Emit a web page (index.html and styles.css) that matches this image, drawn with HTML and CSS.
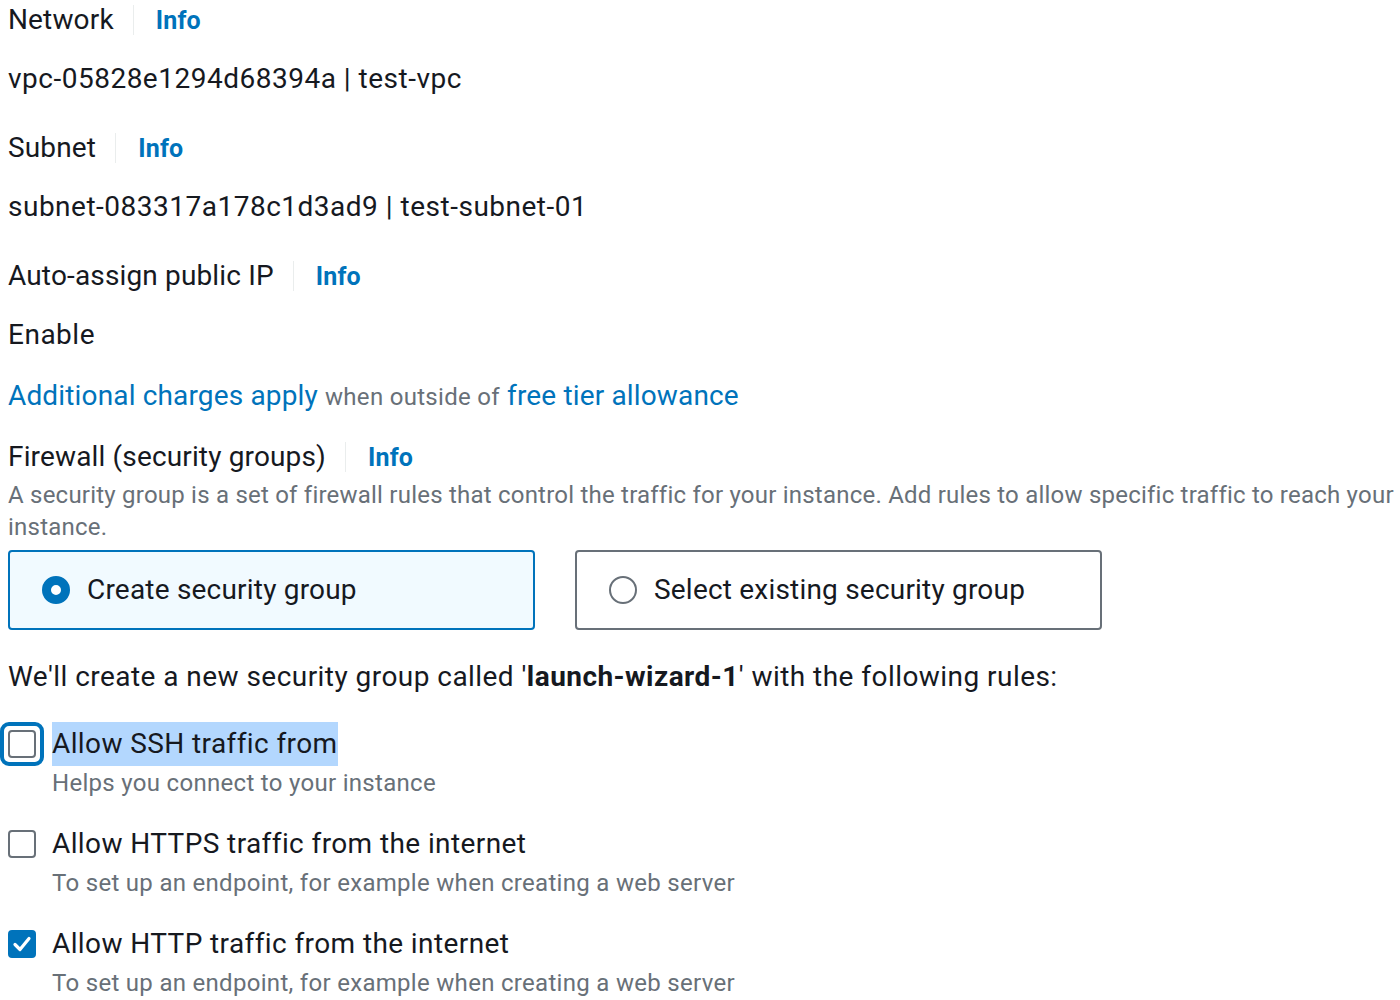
FILE: index.html
```html
<!DOCTYPE html>
<html lang="en">
<head>
<meta charset="utf-8">
<title>Network settings</title>
<link rel="stylesheet" href="styles.css">
</head>
<body>
<main class="form">
  <div class="field">
    <div class="label-row"><span class="label">Network</span><span class="divider"></span><a class="info">Info</a></div>
    <div class="value">vpc-05828e1294d68394a | test-vpc</div>
  </div>
  <div class="field">
    <div class="label-row"><span class="label">Subnet</span><span class="divider"></span><a class="info">Info</a></div>
    <div class="value">subnet-083317a178c1d3ad9 | test-subnet-01</div>
  </div>
  <div class="field">
    <div class="label-row"><span class="label">Auto-assign public IP</span><span class="divider"></span><a class="info">Info</a></div>
    <div class="value">Enable</div>
  </div>
  <p class="charges"><a class="link">Additional charges apply</a> <span class="muted">when outside of</span> <a class="link">free tier allowance</a></p>

  <div class="field firewall">
    <div class="label-row"><span class="label">Firewall (security groups)</span><span class="divider"></span><a class="info">Info</a></div>
    <p class="desc">A security group is a set of firewall rules that control the traffic for your instance. Add rules to allow specific traffic to reach your instance.</p>
    <div class="tiles">
      <label class="tile selected"><span class="radio on"></span>Create security group</label>
      <label class="tile"><span class="radio"></span>Select existing security group</label>
    </div>
  </div>

  <p class="intro">We'll create a new security group called '<b>launch-wizard-1</b>' with the following rules:</p>

  <div class="rules">
    <div class="rule first">
      <span class="box focus"><span class="check"></span></span>
      <div class="rule-text">
        <div class="rule-title"><span class="hl">Allow SSH traffic from</span></div>
        <div class="rule-desc">Helps you connect to your instance</div>
      </div>
    </div>
    <div class="rule">
      <span class="box"><span class="check"></span></span>
      <div class="rule-text">
        <div class="rule-title">Allow HTTPS traffic from the internet</div>
        <div class="rule-desc">To set up an endpoint, for example when creating a web server</div>
      </div>
    </div>
    <div class="rule">
      <span class="box"><span class="check checked"><svg viewBox="0 0 28 28" width="28" height="28"><path d="M7 14.5 L12 19.5 L21 8.5" fill="none" stroke="#fff" stroke-width="3.2" stroke-linecap="round" stroke-linejoin="round"/></svg></span></span>
      <div class="rule-text">
        <div class="rule-title">Allow HTTP traffic from the internet</div>
        <div class="rule-desc">To set up an endpoint, for example when creating a web server</div>
      </div>
    </div>
  </div>
</main>
</body>
</html>
```

FILE: styles.css
```css
* { box-sizing: border-box; }
html, body { margin: 0; padding: 0; background: #fff; }
body {
  font-family: Roboto, "Liberation Sans", Arial, sans-serif;
  color: #16191f;
  font-size: 28px;
  line-height: 40px;
  letter-spacing: 0.5px;
  width: 1400px;
  overflow: hidden;
}
.form { padding: 0 0 0 8px; width: 1430px; }
p { margin: 0; }
a { text-decoration: none; cursor: pointer; }

.field { margin-bottom: 29px; }
.label-row { display: flex; align-items: center; height: 40px; }
.label { color: #16191f; letter-spacing: 0.15px; }
.divider { width: 1px; height: 30px; background: #eaeded; margin: 0 22px 0 19px; }
.info { color: #0073bb; font-weight: 700; font-size: 25px; letter-spacing: 0.2px; padding-top: 2px; }
.value { margin-top: 19px; }

.charges { margin-top: -8px; line-height: 40px; letter-spacing: 0.15px; }
.link { color: #0073bb; }
.muted { color: #687078; font-size: 24px; letter-spacing: 0.3px; }

.firewall { margin-top: 20px; margin-bottom: 27px; }
.desc { color: #687078; font-size: 24px; line-height: 32px; margin-top: 2px; letter-spacing: 0.22px; }
.tiles { display: flex; gap: 40px; margin-top: 7px; }
.tile {
  width: 527px; height: 80px;
  display: flex; align-items: center; gap: 17px;
  padding-left: 32px;
  border: 2px solid #687078; border-radius: 4px;
  background: #fff;
  letter-spacing: 0.2px;
}
.tile.selected { border-color: #0073bb; background: #f1faff; }
.radio {
  width: 28px; height: 28px; border-radius: 50%;
  border: 2px solid #687078; background: #fff; flex: none;
}
.radio.on { border: 9px solid #0073bb; }

.intro { line-height: 40px; letter-spacing: 0.45px; }

.rules { margin-top: 27px; }
.rule { display: flex; gap: 16px; margin-bottom: 25px; }
.rule-title { line-height: 40px; letter-spacing: 0.4px; }
.rule-desc { color: #687078; font-size: 24px; line-height: 32px; margin-top: 3px; letter-spacing: 0.3px; }
.box { width: 28px; height: 28px; margin-top: 6px; position: relative; flex: none; }
.check {
  display: block; width: 28px; height: 28px;
  border: 2px solid #687078; border-radius: 4px; background: #fff;
}
.check.checked { border-color: #0073bb; background: #0073bb; position: relative; }
.check.checked svg { position: absolute; left: -2px; top: -2px; }
.box.focus::before {
  content: ""; position: absolute; left: -8px; top: -8px; right: -8px; bottom: -8px;
  border: 4px solid #0073bb; border-radius: 9px;
}
.hl { background: #b3d7fe; display: inline-block; line-height: 44px; margin: -2px 0; }
```
